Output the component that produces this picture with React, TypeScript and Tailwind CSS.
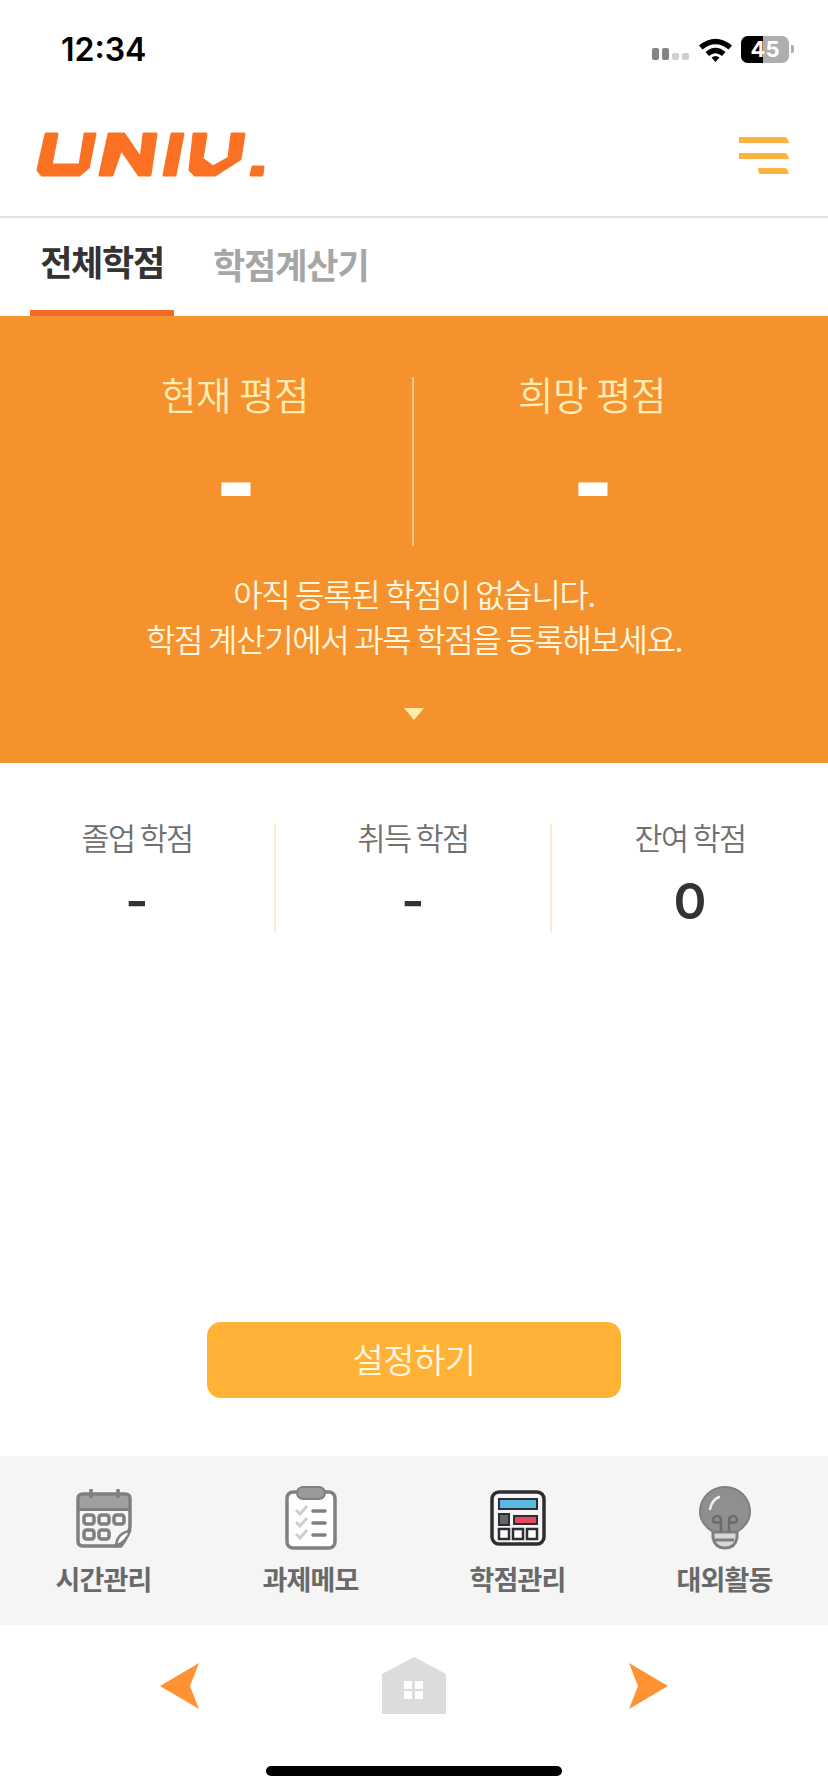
const KR = "font-['Noto_Sans_CJK_KR','Noto_Sans',sans-serif]";

function Logo() {
  return (
    <svg width="232" height="48" viewBox="35 130 232 48" fill="#fb7124" stroke="#fb7124" strokeWidth="3" strokeLinejoin="round">
      <polygon points="46,134 57,134 51,165 80,165 85,134 95,134 88.5,167 79,175 42,175 38,170" />
      <polygon points="109,134 124,134 141,159 144,134 156,134 150,175 139,175 121,149 112,175 100,175" />
      <polygon points="172,134 183,134 175,175 164,175" />
      <polygon points="194,134 206,134 202,159 213,167 229,158 232,134 244,134 240,159 215,175 195,175 190,170" />
      <polygon points="253,167 263,167 262,175 251,175" />
    </svg>
  );
}

function MenuIcon() {
  return (
    <svg width="50" height="38" viewBox="0 0 50 38" fill="#ffb23f">
      <path d="M0 0H46Q49 1 50 6H0Z" />
      <path d="M0 16H46Q49 17 50 22H0Z" />
      <path d="M19 31H46Q49 32 50 37H21Q19 36 19 31Z" />
    </svg>
  );
}

function Calendar() {
  return (
    <svg width="58" height="62" viewBox="0 0 58 62" fill="none">
      <path d="M3 12Q3 7 8 7H50Q55 7 55 12V22H3Z" fill="#a0a0a0" />
      <path d="M3 12Q3 7 8 7H50Q55 7 55 12V40Q53 50 46 59H8Q3 59 3 54Z" stroke="#7f7f7f" strokeWidth="3.5" fill="none" />
      <path d="M3 22.5H55" stroke="#7f7f7f" strokeWidth="3" />
      <path d="M16 2V11M43 2V11" stroke="#7f7f7f" strokeWidth="3.5" />
      <g stroke="#7f7f7f" strokeWidth="3.5" fill="#f5f5f5">
        <rect x="9" y="28" width="10" height="9" rx="2.5" />
        <rect x="24" y="28" width="10" height="9" rx="2.5" />
        <rect x="39" y="28" width="10" height="9" rx="2.5" />
        <rect x="9" y="43" width="10" height="9" rx="2.5" />
        <rect x="24" y="43" width="10" height="9" rx="2.5" />
      </g>
      <path d="M41 59Q42 46 55 44Q52 54 41 59Z" fill="#fff" stroke="#7f7f7f" strokeWidth="2.5" />
    </svg>
  );
}

function Clipboard() {
  return (
    <svg width="52" height="64" viewBox="0 0 52 64" fill="none">
      <rect x="2" y="6" width="48" height="56" rx="6" fill="#fff" stroke="#808080" strokeWidth="3.5" />
      <rect x="12" y="1" width="28" height="12" rx="6" fill="#9a9a9a" stroke="#808080" strokeWidth="2" />
      <g stroke="#cfcfcf" strokeWidth="3" fill="none">
        <path d="M11 24L15 28L22 20" />
        <path d="M11 36L15 40L22 32" />
        <path d="M11 48L15 52L22 44" />
      </g>
      <path d="M28 25H40M28 37H40M28 49H40" stroke="#7f7f7f" strokeWidth="3.5" strokeLinecap="round" />
    </svg>
  );
}

function Calculator() {
  return (
    <svg width="56" height="56" viewBox="0 0 56 56" fill="none">
      <rect x="2" y="2" width="52" height="52" rx="7" fill="#f5f5f5" stroke="#2e2e32" strokeWidth="3.5" />
      <rect x="9" y="9" width="38" height="10" fill="#5bb8e3" stroke="#2e2e32" strokeWidth="2" />
      <rect x="9" y="24" width="10" height="11" fill="#63666a" stroke="#2e2e32" strokeWidth="2" />
      <rect x="24" y="26" width="23" height="8" fill="#e8485f" stroke="#2e2e32" strokeWidth="2" />
      <g fill="#fff" stroke="#2e2e32" strokeWidth="2.5">
        <rect x="9" y="39" width="10" height="10" />
        <rect x="23" y="39" width="10" height="10" />
        <rect x="37" y="39" width="10" height="10" />
      </g>
    </svg>
  );
}

function Bulb() {
  return (
    <svg width="54" height="64" viewBox="0 0 54 64" fill="none">
      <path d="M15 46C6 40 2 33 2 26C2 12 13 1 27 1C41 1 52 12 52 26C52 33 48 40 39 46Z" fill="#8f8f8f" stroke="#7f7f7f" strokeWidth="2" />
      <path d="M15 46H39V52Q37 62 27 62Q17 62 15 52Z" fill="#d8d8d8" stroke="#7f7f7f" strokeWidth="3" />
      <path d="M17 54H36" stroke="#7f7f7f" strokeWidth="3" />
      <path d="M23 46V35C23 28 15 29 15 34C15 37 19 37 23 36M31 46V35C31 28 39 29 39 34C39 37 35 37 31 36" stroke="#6b6b6b" strokeWidth="2.5" fill="none" />
      <path d="M12 23Q14 14 21 11" stroke="#efefef" strokeWidth="2.5" strokeLinecap="round" fill="none" />
    </svg>
  );
}

function Wifi() {
  return (
    <svg width="33" height="25" viewBox="0 0 33 25" fill="#000">
      <path d="M0 8.5Q16.5 -5 33 8.5L29.5 12.5Q16.5 2 3.5 12.5Z" />
      <path d="M6.5 15Q16.5 6.5 26.5 15L23 19Q16.5 13.5 10 19Z" />
      <path d="M12.5 20.5Q16.5 17.5 20.5 20.5L16.5 25Z" />
    </svg>
  );
}

function StatusBar() {
  return (
    <div className="h-[98px] flex items-center justify-between pl-[61px] pr-[34px]">
      <span className="font-['Inter',sans-serif] font-semibold text-[32px] text-black leading-none mt-[2px]">12:34</span>
      <div className="flex items-center">
        <div className="flex items-end gap-[3px] mt-[10px]">
          <span className="block w-[7px] h-[12px] rounded-[2px] bg-[#858585]" />
          <span className="block w-[7px] h-[12px] rounded-[2px] bg-[#858585]" />
          <span className="block w-[7px] h-[7px] rounded-[2px] bg-[#cfcfcf]" />
          <span className="block w-[7px] h-[7px] rounded-[2px] bg-[#cfcfcf]" />
        </div>
        <div className="ml-[10px] mr-[9px]"><Wifi /></div>
        <div className="relative flex w-[48px] h-[27px] rounded-[7px] overflow-hidden bg-[#aeaeae]">
          <div className="w-[22px] bg-black" />
          <span className="absolute inset-0 flex items-center justify-center text-white font-['Inter',sans-serif] font-bold text-[22px] leading-none">45</span>
        </div>
        <div className="w-[3px] h-[8px] ml-[2px] rounded-r-[2px] bg-[#aeaeae]" />
      </div>
    </div>
  );
}

function Header() {
  return (
    <header className="h-[118px] pl-[35px] pr-[39px] pt-[32px] flex justify-between items-start">
      <Logo />
      <div className="mt-[7px]"><MenuIcon /></div>
    </header>
  );
}

function Tabs() {
  return (
    <div className={`h-[100px] border-t-2 border-[#dfdfdf] flex items-stretch pl-[30px] ${KR}`}>
      <div className="w-[144px] flex items-center justify-center pb-[7px] border-b-[6px] border-[#f26a26]">
        <span className="text-[35px] font-bold text-[#333] tracking-[-1.3px] leading-none whitespace-nowrap">전체학점</span>
      </div>
      <div className="ml-[39px] flex items-center pb-[7px]">
        <span className="text-[35px] font-bold text-[#a6a6a6] tracking-[-1.1px] leading-none whitespace-nowrap">학점계산기</span>
      </div>
    </div>
  );
}

function Score({ label, divided }: { label: string; divided?: boolean }) {
  return (
    <div className={`flex flex-col items-center h-[169px] ${divided ? "border-r-2 border-[#fbc887]" : ""}`}>
      <span className="text-[38.5px] leading-[36px] text-[#ffedb5] font-[350] tracking-[-0.5px] -mt-[2px]">{label}</span>
      <span className="mt-[51px] ml-[2px] text-[114px] leading-[36px] font-bold text-white font-['Liberation_Sans',sans-serif]">-</span>
    </div>
  );
}

function Summary() {
  return (
    <section className={`h-[447px] bg-[#f6922d] flex flex-col items-stretch pt-[61px] ${KR}`}>
      <div className="grid grid-cols-2 px-[58px]">
        <Score label="현재 평점" divided />
        <Score label="희망 평점" />
      </div>
      <p className="mt-[25px] text-center text-[32px] leading-[45px] text-[#fff6df] font-[350] tracking-[-1.35px]">
        아직 등록된 학점이 없습니다.<br />학점 계산기에서 과목 학점을 등록해보세요.
      </p>
      <div className="mt-[47px] flex justify-center">
        <svg width="20" height="12" viewBox="0 0 20 12" fill="#ffeea8"><path d="M0 0H20L10 12Z" /></svg>
      </div>
    </section>
  );
}

function Stat({ label, value, divided }: { label: string; value: string; divided?: boolean }) {
  return (
    <div className={`flex flex-col items-center h-[108px] ${divided ? "border-r-2 border-[#fbeccb]" : ""}`}>
      <span className={`text-[30.5px] leading-[30px] text-[#707070] font-[350] tracking-[-1.6px] -mt-[2px] ${KR}`}>{label}</span>
      <span className="mt-[24px] text-[50px] leading-[50px] font-semibold text-[#333] font-['Inter',sans-serif]">{value}</span>
    </div>
  );
}

function NavItem({ icon, label }: { icon: React.ReactNode; label: string }) {
  return (
    <div className="flex flex-col items-center">
      <div className="h-[66px] flex items-center justify-center">{icon}</div>
      <span className={`mt-[13px] text-[27px] leading-[30px] font-bold text-[#696969] tracking-[-0.8px] ${KR}`}>{label}</span>
    </div>
  );
}

export default function App() {
  return (
    <div className="w-[828px] h-[1792px] bg-white flex flex-col overflow-hidden">
      <StatusBar />
      <Header />
      <Tabs />
      <Summary />
      <section className="grid grid-cols-3 pt-[61px]">
        <Stat label="졸업 학점" value="-" divided />
        <Stat label="취득 학점" value="-" divided />
        <Stat label="잔여 학점" value="0" />
      </section>
      <div className="mt-[390px] flex justify-center">
        <button className={`w-[414px] h-[76px] rounded-[14px] bg-[#ffb236] text-[#fff6e3] text-[34px] font-[350] tracking-[-0.5px] pb-[4px] ${KR}`}>설정하기</button>
      </div>
      <nav className="mt-[58px] h-[169px] bg-[#f5f5f5] grid grid-cols-4 pt-[29px]">
        <NavItem icon={<Calendar />} label="시간관리" />
        <NavItem icon={<Clipboard />} label="과제메모" />
        <NavItem icon={<Calculator />} label="학점관리" />
        <NavItem icon={<Bulb />} label="대외활동" />
      </nav>
      <div className="flex justify-center items-start pt-[32px] h-[141px] gap-[183px]">
        <svg width="39" height="46" viewBox="0 0 39 46" fill="#ff9333" className="mt-[6px]"><path d="M39 0L0 23L39 46L30 23Z" /></svg>
        <svg width="64" height="57" viewBox="0 0 64 57" fill="#dcdcdc">
          <path d="M32 0L64 17V57H0V17Z" />
          <g fill="#fff">
            <rect x="22" y="24" width="8" height="8" /><rect x="33" y="24" width="8" height="8" />
            <rect x="22" y="34" width="8" height="8" /><rect x="33" y="34" width="8" height="8" />
          </g>
        </svg>
        <svg width="39" height="46" viewBox="0 0 39 46" fill="#ff9333" className="mt-[6px]"><path d="M0 0L39 23L0 46L9 23Z" /></svg>
      </div>
      <div className="flex justify-center">
        <div className="w-[296px] h-[10px] rounded-full bg-black" />
      </div>
    </div>
  );
}
